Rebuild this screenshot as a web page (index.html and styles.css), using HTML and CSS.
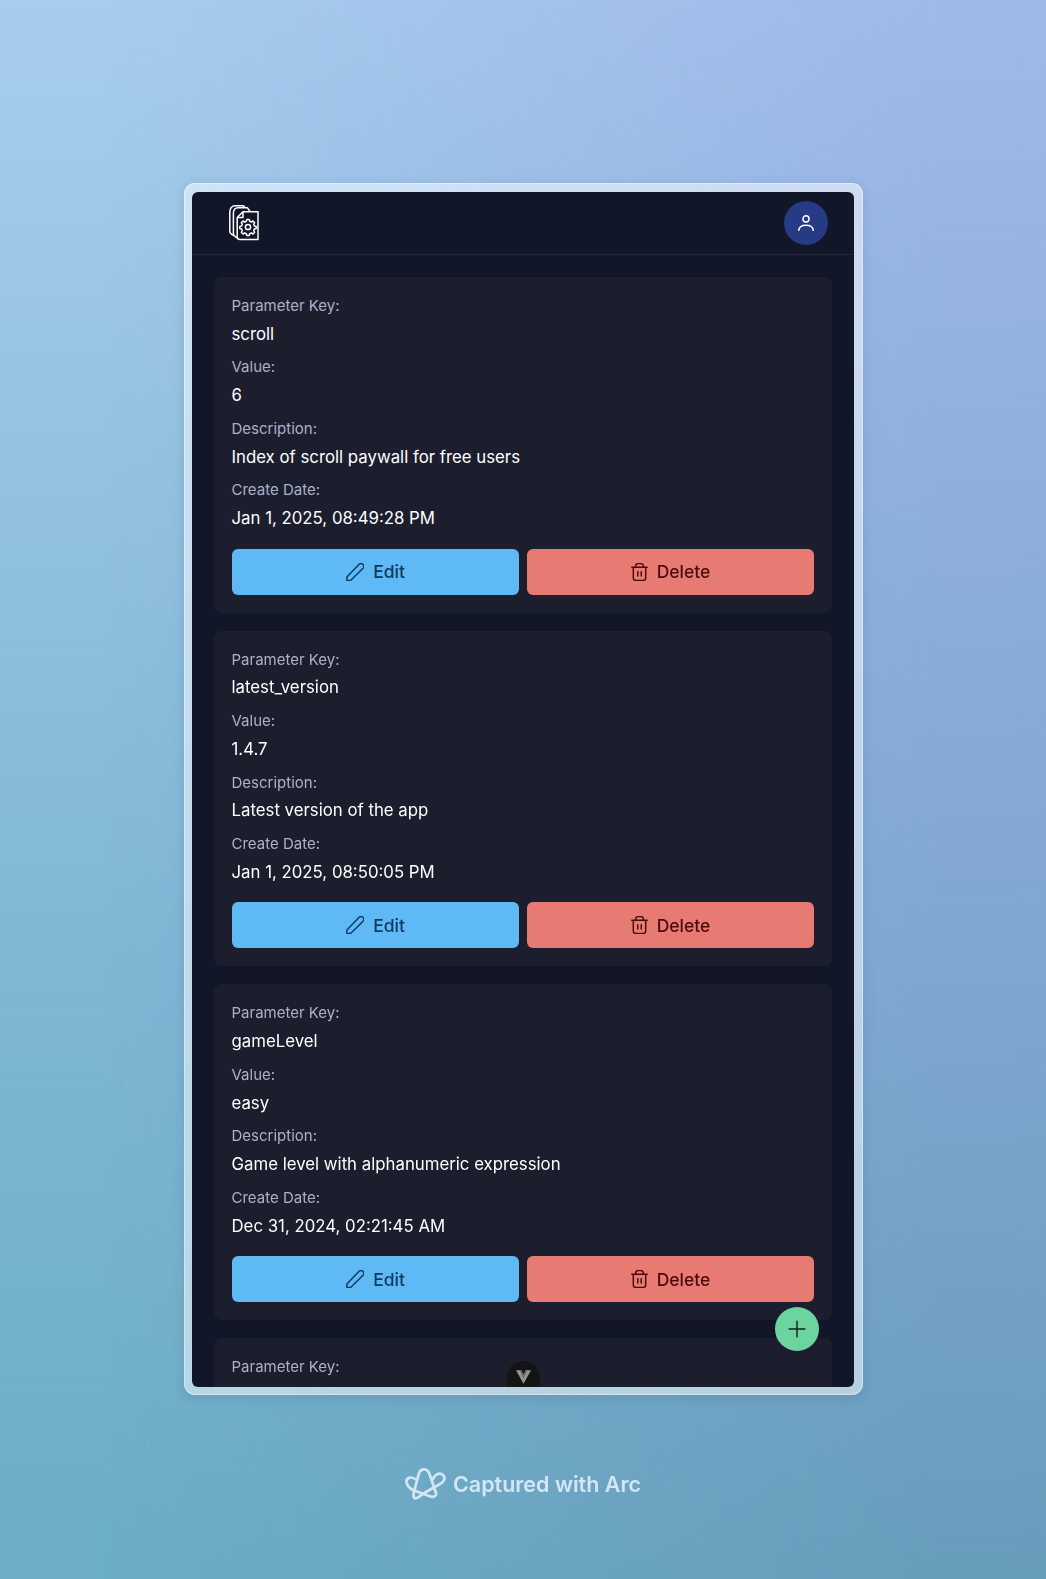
FILE: index.html
```html
<!doctype html>
<html>
<head>
<meta charset="UTF-8">
<title>Parameters</title>
<link rel="stylesheet" href="styles.css">
</head>
<body>
<div class="stage">
  <div class="frame">
    <div class="window">
      <div class="topbar">
        <svg class="logo" viewBox="0 0 30 36" fill="none" stroke="#fff" stroke-width="1.5" stroke-linejoin="round">
          <path d="M5 30.5C2 29.5.8 28 .8 26V7C.8 3 3 .8 6 .8H14.5L16 2.5"/>
          <path d="M9 33C6 32 4.4 30.5 4.4 28.5V8C4.4 4.5 6.5 2.8 9 2.8H18.5L21 6.5"/>
          <path d="M14 6.8H29V34.5H11C9.5 34.5 8.2 33.5 8.2 32V12.5Z" fill="#111729"/>
          <path d="M14 6.8V12.5H8.2"/>
          <circle cx="19" cy="22" r="2.6"/>
          <path d="M17.8 14.5H20.2L20.7 16.3L22.4 17L24 16L25.7 17.7L24.7 19.3L25.4 21L27.2 21.5V23.5L25.4 24L24.7 25.7L25.7 27.3L24 29L22.4 28L20.7 28.7L20.2 30.5H17.8L17.3 28.7L15.6 28L14 29L12.3 27.3L13.3 25.7L12.6 24L10.8 23.5V21.5L12.6 21L13.3 19.3L12.3 17.7L14 16L15.6 17L17.3 16.3Z"/>
        </svg>
        <div class="avatar">
          <svg viewBox="0 0 24 24" fill="none" stroke="#fff" stroke-width="1.6" stroke-linecap="round">
            <circle cx="12" cy="7.5" r="3.3"/>
            <path d="M4 20C4.5 16.5 8 14.5 12 14.5S19.5 16.5 20 20"/>
          </svg>
        </div>
      </div>
      <div class="list">
        <div class="card">
          <div class="field"><div class="label">Parameter Key:</div><div class="value">scroll</div></div>
          <div class="field"><div class="label">Value:</div><div class="value">6</div></div>
          <div class="field"><div class="label">Description:</div><div class="value">Index of scroll paywall for free users</div></div>
          <div class="field"><div class="label">Create Date:</div><div class="value">Jan 1, 2025, 08:49:28 PM</div></div>
          <div class="actions">
            <button class="btn btn-edit"><svg class="ico-edit" viewBox="1.7 1.2 20.5 21"><path d="M2.5 21.5V17.5L16.5 3C18 1.6 20 1.6 21.3 3S22.6 6 21.3 7.4L6.8 21.5Z"/></svg>Edit</button>
            <button class="btn btn-delete"><svg class="ico-delete" viewBox="2.3 1.5 19.4 20.9"><path d="M3 6.5H21M7.5 6.5V5C7.5 3.4 8.9 2.2 10.5 2.2H13.5C15.1 2.2 16.5 3.4 16.5 5V6.5M4.8 6.5V19C4.8 20.5 6 21.7 7.5 21.7H16.5C18 21.7 19.2 20.5 19.2 19V6.5M10 11.5V16.5M14 11.5V16.5"/></svg>Delete</button>
          </div>
        </div>
        <div class="card">
          <div class="field"><div class="label">Parameter Key:</div><div class="value">latest_version</div></div>
          <div class="field"><div class="label">Value:</div><div class="value">1.4.7</div></div>
          <div class="field"><div class="label">Description:</div><div class="value">Latest version of the app</div></div>
          <div class="field"><div class="label">Create Date:</div><div class="value">Jan 1, 2025, 08:50:05 PM</div></div>
          <div class="actions">
            <button class="btn btn-edit"><svg class="ico-edit" viewBox="1.7 1.2 20.5 21"><path d="M2.5 21.5V17.5L16.5 3C18 1.6 20 1.6 21.3 3S22.6 6 21.3 7.4L6.8 21.5Z"/></svg>Edit</button>
            <button class="btn btn-delete"><svg class="ico-delete" viewBox="2.3 1.5 19.4 20.9"><path d="M3 6.5H21M7.5 6.5V5C7.5 3.4 8.9 2.2 10.5 2.2H13.5C15.1 2.2 16.5 3.4 16.5 5V6.5M4.8 6.5V19C4.8 20.5 6 21.7 7.5 21.7H16.5C18 21.7 19.2 20.5 19.2 19V6.5M10 11.5V16.5M14 11.5V16.5"/></svg>Delete</button>
          </div>
        </div>
        <div class="card">
          <div class="field"><div class="label">Parameter Key:</div><div class="value">gameLevel</div></div>
          <div class="field"><div class="label">Value:</div><div class="value">easy</div></div>
          <div class="field"><div class="label">Description:</div><div class="value">Game level with alphanumeric expression</div></div>
          <div class="field"><div class="label">Create Date:</div><div class="value">Dec 31, 2024, 02:21:45 AM</div></div>
          <div class="actions">
            <button class="btn btn-edit"><svg class="ico-edit" viewBox="1.7 1.2 20.5 21"><path d="M2.5 21.5V17.5L16.5 3C18 1.6 20 1.6 21.3 3S22.6 6 21.3 7.4L6.8 21.5Z"/></svg>Edit</button>
            <button class="btn btn-delete"><svg class="ico-delete" viewBox="2.3 1.5 19.4 20.9"><path d="M3 6.5H21M7.5 6.5V5C7.5 3.4 8.9 2.2 10.5 2.2H13.5C15.1 2.2 16.5 3.4 16.5 5V6.5M4.8 6.5V19C4.8 20.5 6 21.7 7.5 21.7H16.5C18 21.7 19.2 20.5 19.2 19V6.5M10 11.5V16.5M14 11.5V16.5"/></svg>Delete</button>
          </div>
        </div>
        <div class="card">
          <div class="field"><div class="label">Parameter Key:</div></div>
        </div>
      </div>
      <div class="fab">
        <svg viewBox="0 0 24 24" fill="none" stroke="#14231d" stroke-width="1.6" stroke-linecap="round"><path d="M12 3.5V20.5M3.5 12H20.5"/></svg>
      </div>
      <div class="devtools">
        <svg viewBox="0 0 20 18"><path d="M0 0H7L10 6L13 0H20L10 18Z" fill="#959595"/><path d="M5 1 10 11 15 1H13L10 6 7 1Z" fill="#6e6e6e"/></svg>
      </div>
    </div>
  </div>
  <div class="credit">
    <svg viewBox="0 0 41 34" fill="none" stroke="#d3e6f4" stroke-width="2.7" stroke-linejoin="round" stroke-linecap="round">
      <path d="M10 12C6 9 1 11 1.500 15C2 18 4 21 8 23L24 29C28 30.500 32 30 31 26L24.500 7C22.500 1 16 1 14 6L9 25C7.500 30 9 32 12 31C14 30 17 27.500 21 25C26 22 30 20 35 17C39 15 41 11 38 8C35 5 30 7 28 12"/>
    </svg>
    <span>Captured with Arc</span>
  </div>
</div>
</body>
</html>
```

FILE: styles.css
```css
* {
	box-sizing: border-box;
}
html, body {
	height: 100%;
}
body {
	margin: 0;
	font-family: "Inter", "Liberation Sans", sans-serif;
	background: linear-gradient(180deg, #a7cdee 0%, #7fb6d4 62%, #6baec6 100%);
	overflow: hidden;
}
/* right side of the backdrop is bluer, faded in over the left */
body::before {
	content: "";
	position: fixed;
	inset: 0;
	background: linear-gradient(180deg, #a0b8e8 0%, #7ea6cf 62%, #689cbb 100%);
	-webkit-mask-image: linear-gradient(90deg, transparent 10%, #000 90%);
	mask-image: linear-gradient(90deg, transparent 10%, #000 90%);
}
.stage {
	position: relative;
	display: flex;
	flex-direction: column;
	align-items: center;
	padding-top: 183px;
}
.frame {
	width: 679px;
	height: 1212px;
	padding: 9px 8.5px 8px;
	border-radius: 11px;
	background: rgba(255, 255, 255, .5);
	box-shadow: inset 0 0 0 1px rgba(255, 255, 255, .4), 0 3px 12px rgba(40, 70, 110, .16);
}
.window {
	position: relative;
	display: flex;
	flex-direction: column;
	height: 100%;
	border-radius: 6px;
	overflow: hidden;
	background: #111729;
}
.topbar {
	display: flex;
	flex: none;
	align-items: center;
	justify-content: space-between;
	height: 63px;
	padding: 0 26px 1px 37px;
	border-bottom: 1px solid #232838;
}
.logo {
	width: 30px;
	height: 36px;
}
.avatar {
	display: flex;
	align-items: center;
	justify-content: center;
	width: 44px;
	height: 44px;
	border-radius: 50%;
	background: #273a85;
}
.avatar svg {
	width: 22px;
	height: 22px;
}
.list {
	flex: 1;
	overflow: hidden;
	padding: 22px 22px 0;
}
.card {
	padding: 18px;
	margin-bottom: 18px;
	border-radius: 8px;
	background: #1c1e2d;
}
.field {
	margin: 0 0 8.9px -.5px;
}
.label {
	margin-bottom: 3.6px;
	font-size: 15px;
	line-height: 22px;
	color: #a9b2c8;
}
.value {
	font-size: 16.8px;
	font-weight: 400;
	line-height: 27px;
	color: #fff;
}
.actions {
	display: flex;
	gap: 8px;
	margin-top: 16.7px;
}
.btn {
	display: flex;
	flex: 1;
	align-items: center;
	justify-content: center;
	gap: 9px;
	height: 46px;
	padding: 0;
	border: 0;
	border-radius: 6px;
	font-family: inherit;
	font-size: 17.5px;
	font-weight: 500;
}
.btn svg {
	fill: none;
	stroke: currentColor;
	stroke-width: 1.7;
	stroke-linecap: round;
	stroke-linejoin: round;
}
.ico-edit {
	width: 18px;
	height: 18px;
}
.ico-delete {
	width: 17px;
	height: 18px;
}
.btn-edit {
	background: #5eb9f5;
	color: #0c3a5e;
}
.btn-delete {
	background: #e87a74;
	color: #4d0a0a;
}
.fab {
	position: absolute;
	right: 35px;
	bottom: 36px;
	display: flex;
	align-items: center;
	justify-content: center;
	width: 44px;
	height: 44px;
	border-radius: 50%;
	background: #6bd49f;
}
.fab svg {
	width: 22px;
	height: 22px;
}
.devtools {
	position: absolute;
	left: 315px;
	bottom: -18px;
	display: flex;
	align-items: center;
	justify-content: center;
	width: 33px;
	height: 44px;
	padding-bottom: 12px;
	border-radius: 17px;
	background: #141414;
}
.devtools svg {
	width: 15px;
	height: 14px;
}
.credit {
	display: flex;
	align-items: center;
	gap: 7px;
	margin-top: 72px;
	font-size: 21.5px;
	font-weight: 600;
	color: #d3e6f4;
}
.credit svg {
	width: 41px;
	height: 34px;
}
```
